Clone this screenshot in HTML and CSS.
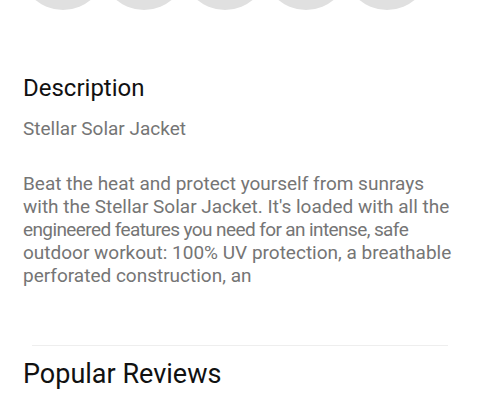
FILE: index.html
```html
<!DOCTYPE html>
<html>
<head>
<meta charset="utf-8">
<link rel="stylesheet" href="styles.css">
</head>
<body>
<div class="page">
  <div class="swatches">
    <div class="swatch"><span class="dot"></span></div>
    <div class="swatch"><span class="dot"></span></div>
    <div class="swatch"><span class="dot"></span></div>
    <div class="swatch"><span class="dot"></span></div>
    <div class="swatch"><span class="dot"></span></div>
  </div>
  <section class="desc">
    <h2 class="title">Description</h2>
    <p class="subtitle">Stellar Solar Jacket</p>
    <p class="body">Beat the heat and protect yourself from sunrays<br>with the Stellar Solar Jacket. It's loaded with all the<br><span class="tight">engineered features you need for an intense, safe</span><br>outdoor workout: 100% UV protection, a breathable<br>perforated construction, an</p>
  </section>
  <hr class="divider">
  <h2 class="reviews">Popular Reviews</h2>
</div>
</body>
</html>
```
FILE: styles.css
```css
html, body {
  margin: 0;
  padding: 0;
  background: #fff;
}
body {
  font-family: Roboto, "Noto Sans", sans-serif;
  width: 480px;
  height: 400px;
  overflow: hidden;
}
.page {
  display: flex;
  flex-direction: column;
}
.swatches {
  display: flex;
  height: 10px;
  padding-left: 22px;
  overflow: visible;
}
.swatch {
  width: 81px;
  flex: none;
  display: flex;
  justify-content: center;
  align-items: flex-end;
  height: 10px;
}
.dot {
  flex: none;
  width: 86px;
  height: 86px;
  border-radius: 50%;
  background: #e0e0e0;
}
.desc {
  padding: 0 8px 0 23px;
}
.title {
  margin: 58px 0 0;
  font-size: 24px;
  font-weight: 400;
  line-height: 40px;
  color: #111;
}
.subtitle {
  margin: 9px 0 0;
  font-size: 19px;
  line-height: 24px;
  color: #757575;
}
.body {
  margin: 31px 0 0;
  font-size: 19px;
  line-height: 23px;
  color: #757575;
  white-space: nowrap;
}
.tight {
  letter-spacing: -0.6px;
}
.divider {
  margin: 58px 32px 0;
  border: 0;
  height: 1px;
  background: #eeeeee;
}
.reviews {
  margin: 8px 23px 0;
  font-size: 27px;
  font-weight: 400;
  line-height: 40px;
  color: #111;
}
```
